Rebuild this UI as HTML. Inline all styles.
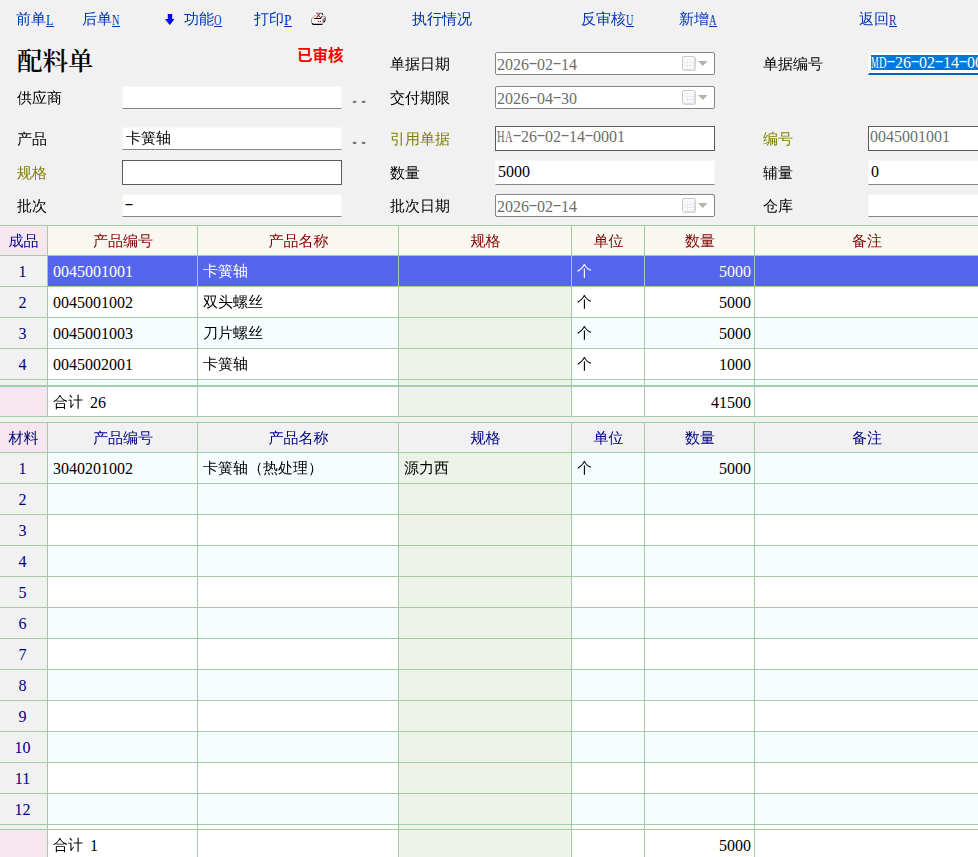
<!DOCTYPE html>
<html lang="zh-CN"><head><meta charset="utf-8"><title>配料单</title><style>
*{box-sizing:border-box;margin:0;padding:0}
html,body{width:978px;height:857px;overflow:hidden;background:#f1f1f1}
body{position:relative;font-family:"Liberation Serif","WenQuanYi Zen Hei","Noto Sans CJK SC",sans-serif;font-size:15px;color:#000;line-height:18px}
.a{position:absolute;white-space:nowrap}
.n{font-size:16px}
.h{display:inline-block;width:8px;white-space:nowrap;transform-origin:0 50%;transform:translate(-0.500px,-2px) scaleX(1.68)}
.m{display:inline-block;width:8px;white-space:nowrap;transform-origin:0 50%}
.tb{color:#0033b3;top:10px;height:18px}
.tb u{display:inline-block;position:relative;width:8px;height:18px;vertical-align:top;text-decoration:none;font-size:14px;line-height:18px}
.tb u .m{position:relative;top:2px}
.tb u::after{content:"";position:absolute;left:0;top:16px;width:8px;height:1px;background:#0033b3}
.lb{height:18px}
.ol{color:#808000}
.title{left:17px;top:44px;font-family:"Liberation Serif","Noto Serif CJK SC",serif;font-weight:600;font-size:25.500px;line-height:36px}
.stamp{left:297px;top:46px;font-family:"Liberation Sans","Noto Sans CJK SC",sans-serif;font-weight:bold;font-size:15.5px;color:#f00;line-height:20px}
.flat{background:#fff;border:1px solid #f7f7f7;border-bottom:1px solid #868686;border-radius:1px;height:23px;padding:1px 3px;line-height:18px}
.box{background:#fff;border:1px solid #858585;border-radius:2px;height:23px;padding:3px 1px 0;line-height:18px;color:#6d6d6d}
.sqb{background:#fff;border:1px solid #5a5a5a;height:25px;padding:1px 2px;line-height:18px;color:#6d6d6d}
.dd{color:#727272;font-family:"Liberation Sans",sans-serif;font-weight:bold;letter-spacing:2.900px;font-size:22px;line-height:22px;transform-origin:0 100%;transform:scaleY(.68)}
.hl{background:#0078d7;color:#fff;display:inline-block;height:15px;line-height:15px;vertical-align:top}
.grid{position:absolute;left:0;width:978px;background:#a4cca4}
.c{position:absolute;white-space:nowrap;overflow:hidden;line-height:18px}
.c .n{position:relative;top:1px}
</style></head><body>
<div class="a tb" style="left:16px">前单<u><span class="m" style="transform:scaleX(0.865)">L</span></u></div>
<div class="a tb" style="left:82px">后单<u><span class="m" style="transform:scaleX(0.732)">N</span></u></div>
<div class="a tb" style="left:184px">功能<u><span class="m" style="transform:scaleX(0.732)">O</span></u></div>
<div class="a tb" style="left:254px">打印<u><span class="m" style="transform:scaleX(0.950)">P</span></u></div>
<div class="a tb" style="left:412px">执行情况</div>
<div class="a tb" style="left:581px">反审核<u><span class="m" style="transform:scaleX(0.732)">U</span></u></div>
<div class="a tb" style="left:679px">新增<u><span class="m" style="transform:scaleX(0.732)">A</span></u></div>
<div class="a tb" style="left:859px">返回<u><span class="m" style="transform:scaleX(0.792)">R</span></u></div>
<svg class="a" style="left:158px;top:6px" width="30" height="26" viewBox="0 0 30 26"><path d="M9.800 8h4.400v5h2.200l-4.400 6-4.700-6h2.500z" fill="#0000ff"/><path d="M7.200 13.400l4.600 5.500" stroke="#6e6e46" stroke-width="1" fill="none"/></svg>
<svg class="a" style="left:304px;top:6px" width="30" height="26" viewBox="0 0 30 26"><path d="M12 7.300h7l-2 5.200H8z" fill="#fff"/><path d="M7.300 13l11.200 0 3.500-2.600v4.200l-3.500 3.700H8.500l-1.200-1z" fill="#fff"/><path d="M18.500 13l3.500-2.600v4.300l-3.500 3.600z" fill="#828282"/><path d="M12 7.300h7" stroke="#6a6a6a" stroke-width="1"/><circle cx="18.500" cy="8.300" r=".7" fill="#000"/><path d="M11.500 9L7.500 13v4" stroke="#8c8c8c" stroke-width=".9" fill="none"/><path d="M12.400 11.700l3.300-3.500" stroke="#f00" stroke-width="1.100"/><path d="M13.400 8.300l3.200 3.300" stroke="#a01010" stroke-width="1"/><path d="M17.700 10.300l-.9 2" stroke="#000" stroke-width="1"/><path d="M10.200 12.500h6.700" stroke="#000" stroke-width="1"/><path d="M17.500 10.200l4 .2" stroke="#8c8c8c" stroke-width=".9"/><path d="M8 17.300l1.200 1h9.200" stroke="#000" stroke-width="1.200" fill="none"/><circle cx="14.500" cy="15.500" r=".75" fill="#f00"/><circle cx="16.500" cy="15.500" r=".75" fill="#f00"/><circle cx="20.400" cy="15.400" r=".7" fill="#000"/></svg>
<div class="a title" style="">配料单</div>
<div class="a stamp" style="">已审核</div>
<div class="a lb" style="left:390px;top:55px">单据日期</div>
<div class="a lb" style="left:763px;top:55px">单据编号</div>
<div class="a lb" style="left:17px;top:89px">供应商</div>
<div class="a lb" style="left:390px;top:89px">交付期限</div>
<div class="a lb" style="left:17px;top:130px">产品</div>
<div class="a lb ol" style="left:390px;top:130px">引用单据</div>
<div class="a lb ol" style="left:763px;top:130px">编号</div>
<div class="a lb ol" style="left:17px;top:164px">规格</div>
<div class="a lb" style="left:390px;top:164px">数量</div>
<div class="a lb" style="left:763px;top:164px">辅量</div>
<div class="a lb" style="left:17px;top:197px">批次</div>
<div class="a lb" style="left:390px;top:197px">批次日期</div>
<div class="a lb" style="left:763px;top:197px">仓库</div>
<div class="a box" style="left:495px;top:52px;width:220px"><span class="n">2026<span class="h">-</span>02<span class="h">-</span>14</span><svg style="position:absolute;left:186px;top:3px" width="27" height="16" viewBox="0 0 27 16"><rect x="1.500" y="1.500" width="12" height="13" rx="1" fill="#eef1f6" stroke="#e3dede"/><rect x="0.500" y="0.500" width="12.500" height="13.500" rx="1.500" fill="#fbfcfd" stroke="#cdc4c4"/><path d="M2.500 3.500h9.500v9h-9.500z" fill="#e6eaf1"/><path d="M3 4h2v2H3zM6 4h2v2H6zM9 4h2v2H9zM3 7h2v2H3zM6 7h2v2H6zM9 7h2v2H9zM3 10h2v2H3zM6 10h2v2H6zM9 10h2v2H9z" fill="#fff"/><path d="M16 5h9.500l-4.750 5z" fill="#b3b3aa"/></svg></div>
<div class="a box" style="left:495px;top:86px;width:220px"><span class="n">2026<span class="h">-</span>04<span class="h">-</span>30</span><svg style="position:absolute;left:186px;top:3px" width="27" height="16" viewBox="0 0 27 16"><rect x="1.500" y="1.500" width="12" height="13" rx="1" fill="#eef1f6" stroke="#e3dede"/><rect x="0.500" y="0.500" width="12.500" height="13.500" rx="1.500" fill="#fbfcfd" stroke="#cdc4c4"/><path d="M2.500 3.500h9.500v9h-9.500z" fill="#e6eaf1"/><path d="M3 4h2v2H3zM6 4h2v2H6zM9 4h2v2H9zM3 7h2v2H3zM6 7h2v2H6zM9 7h2v2H9zM3 10h2v2H3zM6 10h2v2H6zM9 10h2v2H9z" fill="#fff"/><path d="M16 5h9.500l-4.750 5z" fill="#b3b3aa"/></svg></div>
<div class="a box" style="left:495px;top:194px;width:220px"><span class="n">2026<span class="h">-</span>02<span class="h">-</span>14</span><svg style="position:absolute;left:186px;top:3px" width="27" height="16" viewBox="0 0 27 16"><rect x="1.500" y="1.500" width="12" height="13" rx="1" fill="#eef1f6" stroke="#e3dede"/><rect x="0.500" y="0.500" width="12.500" height="13.500" rx="1.500" fill="#fbfcfd" stroke="#cdc4c4"/><path d="M2.500 3.500h9.500v9h-9.500z" fill="#e6eaf1"/><path d="M3 4h2v2H3zM6 4h2v2H6zM9 4h2v2H9zM3 7h2v2H3zM6 7h2v2H6zM9 7h2v2H9zM3 10h2v2H3zM6 10h2v2H6zM9 10h2v2H9z" fill="#fff"/><path d="M16 5h9.500l-4.750 5z" fill="#b3b3aa"/></svg></div>
<div class="a flat" style="left:122px;top:86px;width:220px"></div>
<div class="a flat" style="left:122px;top:127px;width:220px">卡簧轴</div>
<div class="a flat" style="left:122px;top:194px;width:220px;padding:2px 2px"><span class="n"><span class="h">-</span></span></div>
<div class="a flat" style="left:495px;top:160px;width:220px;height:25px;padding:2px 2px"><span class="n">5000</span></div>
<div class="a flat" style="left:868px;top:160px;width:120px;height:25px;padding:2px 2px"><span class="n">0</span></div>
<div class="a flat" style="left:868px;top:194px;width:120px"></div>
<div class="a sqb" style="left:122px;top:160px;width:220px"></div>
<div class="a sqb" style="left:495px;top:126px;width:220px;padding-left:1px"><span class="n"><span class="m" style="transform:scaleX(0.658)">H</span><span class="m" style="transform:scaleX(0.658)">A</span><span class="h">-</span>26<span class="h">-</span>02<span class="h">-</span>14<span class="h">-</span>0001</span></div>
<div class="a sqb" style="left:868px;top:126px;width:120px;padding-left:1px"><span class="n">0045001001</span></div>
<div class="a " style="left:868px;top:52px;width:120px;height:23px;border:1px solid #f7f7f7;border-bottom:2px solid #0067c0;background:#fff;padding:2px 2px;line-height:15px"><span class="hl"><span class="n"><span class="m" style="transform:scaleX(0.534)">M</span><span class="m" style="transform:scaleX(0.658)">D</span><span class="h">-</span>26<span class="h">-</span>02<span class="h">-</span>14<span class="h">-</span>0001</span></span></div>
<div class="a dd" style="left:351.500px;top:84px">..</div>
<div class="a dd" style="left:351.500px;top:125px">..</div>
<div class="grid" style="top:225px;height:192px"></div>
<div class="c" style="left:0px;top:226px;width:47px;height:29px;background:#f5e6f0;text-align:center;color:#000080;padding-top:6px">成品</div>
<div class="c" style="left:48px;top:226px;width:149px;height:29px;background:#f8f8f0;text-align:center;color:#800000;padding-top:6px;padding-left:1px">产品编号</div>
<div class="c" style="left:198px;top:226px;width:200px;height:29px;background:#f8f8f0;text-align:center;color:#800000;padding-top:6px;padding-left:1px">产品名称</div>
<div class="c" style="left:399px;top:226px;width:172px;height:29px;background:#f8f8f0;text-align:center;color:#800000;padding-top:6px;padding-left:1px">规格</div>
<div class="c" style="left:572px;top:226px;width:72px;height:29px;background:#f8f8f0;text-align:center;color:#800000;padding-top:6px;padding-left:1px">单位</div>
<div class="c" style="left:645px;top:226px;width:109px;height:29px;background:#f8f8f0;text-align:center;color:#800000;padding-top:6px;padding-left:1px">数量</div>
<div class="c" style="left:755px;top:226px;width:223px;height:29px;background:#f8f8f0;text-align:center;color:#800000;padding-top:6px;padding-left:1px">备注</div>
<div class="c" style="left:0px;top:256px;width:47px;height:30px;background:#f1f1f1;text-align:center;color:#000080;padding-top:6px;padding-right:2px"><span class="n">1</span></div>
<div class="c" style="left:48px;top:256px;width:149px;height:30px;background:#5565ee;padding-top:6px;padding-left:5px;color:#fff;"><span class="n">0045001001</span></div>
<div class="c" style="left:198px;top:256px;width:200px;height:30px;background:#5565ee;padding-top:6px;padding-left:5px;color:#fff;">卡簧轴</div>
<div class="c" style="left:399px;top:256px;width:172px;height:30px;background:#5565ee;padding-top:6px;padding-left:5px;color:#fff;"></div>
<div class="c" style="left:572px;top:256px;width:72px;height:30px;background:#5565ee;padding-top:6px;padding-left:5px;color:#fff;">个</div>
<div class="c" style="left:645px;top:256px;width:109px;height:30px;background:#5565ee;padding-top:6px;padding-left:5px;color:#fff;text-align:right;padding-right:3px;"><span class="n">5000</span></div>
<div class="c" style="left:755px;top:256px;width:223px;height:30px;background:#5565ee;padding-top:6px;padding-left:5px;color:#fff;"></div>
<div class="c" style="left:0px;top:287px;width:47px;height:30px;background:#f1f1f1;text-align:center;color:#000080;padding-top:6px;padding-right:2px"><span class="n">2</span></div>
<div class="c" style="left:48px;top:287px;width:149px;height:30px;background:#fff;padding-top:6px;padding-left:5px;"><span class="n">0045001002</span></div>
<div class="c" style="left:198px;top:287px;width:200px;height:30px;background:#fff;padding-top:6px;padding-left:5px;">双头螺丝</div>
<div class="c" style="left:399px;top:287px;width:172px;height:30px;background:#edf3e9;padding-top:6px;padding-left:5px;"></div>
<div class="c" style="left:572px;top:287px;width:72px;height:30px;background:#fff;padding-top:6px;padding-left:5px;">个</div>
<div class="c" style="left:645px;top:287px;width:109px;height:30px;background:#fff;padding-top:6px;padding-left:5px;text-align:right;padding-right:3px;"><span class="n">5000</span></div>
<div class="c" style="left:755px;top:287px;width:223px;height:30px;background:#fff;padding-top:6px;padding-left:5px;"></div>
<div class="c" style="left:0px;top:318px;width:47px;height:30px;background:#f1f1f1;text-align:center;color:#000080;padding-top:6px;padding-right:2px"><span class="n">3</span></div>
<div class="c" style="left:48px;top:318px;width:149px;height:30px;background:#f5fdff;padding-top:6px;padding-left:5px;"><span class="n">0045001003</span></div>
<div class="c" style="left:198px;top:318px;width:200px;height:30px;background:#f5fdff;padding-top:6px;padding-left:5px;">刀片螺丝</div>
<div class="c" style="left:399px;top:318px;width:172px;height:30px;background:#edf3e9;padding-top:6px;padding-left:5px;"></div>
<div class="c" style="left:572px;top:318px;width:72px;height:30px;background:#f5fdff;padding-top:6px;padding-left:5px;">个</div>
<div class="c" style="left:645px;top:318px;width:109px;height:30px;background:#f5fdff;padding-top:6px;padding-left:5px;text-align:right;padding-right:3px;"><span class="n">5000</span></div>
<div class="c" style="left:755px;top:318px;width:223px;height:30px;background:#f5fdff;padding-top:6px;padding-left:5px;"></div>
<div class="c" style="left:0px;top:349px;width:47px;height:30px;background:#f1f1f1;text-align:center;color:#000080;padding-top:6px;padding-right:2px"><span class="n">4</span></div>
<div class="c" style="left:48px;top:349px;width:149px;height:30px;background:#fff;padding-top:6px;padding-left:5px;"><span class="n">0045002001</span></div>
<div class="c" style="left:198px;top:349px;width:200px;height:30px;background:#fff;padding-top:6px;padding-left:5px;">卡簧轴</div>
<div class="c" style="left:399px;top:349px;width:172px;height:30px;background:#edf3e9;padding-top:6px;padding-left:5px;"></div>
<div class="c" style="left:572px;top:349px;width:72px;height:30px;background:#fff;padding-top:6px;padding-left:5px;">个</div>
<div class="c" style="left:645px;top:349px;width:109px;height:30px;background:#fff;padding-top:6px;padding-left:5px;text-align:right;padding-right:3px;"><span class="n">1000</span></div>
<div class="c" style="left:755px;top:349px;width:223px;height:30px;background:#fff;padding-top:6px;padding-left:5px;"></div>
<div class="c" style="left:0px;top:380px;width:47px;height:5px;background:#f1f1f1;"></div>
<div class="c" style="left:48px;top:380px;width:149px;height:5px;background:#f5fdff;"></div>
<div class="c" style="left:198px;top:380px;width:200px;height:5px;background:#f5fdff;"></div>
<div class="c" style="left:399px;top:380px;width:172px;height:5px;background:#edf3e9;"></div>
<div class="c" style="left:572px;top:380px;width:72px;height:5px;background:#f5fdff;"></div>
<div class="c" style="left:645px;top:380px;width:109px;height:5px;background:#f5fdff;"></div>
<div class="c" style="left:755px;top:380px;width:223px;height:5px;background:#f5fdff;"></div>
<div class="c" style="left:0;top:385px;width:978px;height:1px;background:#9ec4ea"></div>
<div class="c" style="left:0px;top:387px;width:47px;height:29px;background:#f5e6f0;"></div>
<div class="c" style="left:48px;top:387px;width:149px;height:29px;background:#fff;padding-top:6px;padding-left:5px;">合计<span style="margin-left:7px"><span class="n">26</span></span></div>
<div class="c" style="left:198px;top:387px;width:200px;height:29px;background:#fff;padding-top:6px;padding-left:5px;"></div>
<div class="c" style="left:399px;top:387px;width:172px;height:29px;background:#edf3e9;padding-top:6px;padding-left:5px;"></div>
<div class="c" style="left:572px;top:387px;width:72px;height:29px;background:#fff;padding-top:6px;padding-left:5px;"></div>
<div class="c" style="left:645px;top:387px;width:109px;height:29px;background:#fff;padding-top:6px;padding-left:5px;text-align:right;padding-right:3px;"><span class="n">41500</span></div>
<div class="c" style="left:755px;top:387px;width:223px;height:29px;background:#fff;padding-top:6px;padding-left:5px;"></div>
<div class="grid" style="top:422px;height:435px"></div>
<div class="c" style="left:0px;top:423px;width:47px;height:29px;background:#f5e6f0;text-align:center;color:#000080;padding-top:6px">材料</div>
<div class="c" style="left:48px;top:423px;width:149px;height:29px;background:#f1f1f1;text-align:center;color:#000080;padding-top:6px;padding-left:1px">产品编号</div>
<div class="c" style="left:198px;top:423px;width:200px;height:29px;background:#f1f1f1;text-align:center;color:#000080;padding-top:6px;padding-left:1px">产品名称</div>
<div class="c" style="left:399px;top:423px;width:172px;height:29px;background:#f1f1f1;text-align:center;color:#000080;padding-top:6px;padding-left:1px">规格</div>
<div class="c" style="left:572px;top:423px;width:72px;height:29px;background:#f1f1f1;text-align:center;color:#000080;padding-top:6px;padding-left:1px">单位</div>
<div class="c" style="left:645px;top:423px;width:109px;height:29px;background:#f1f1f1;text-align:center;color:#000080;padding-top:6px;padding-left:1px">数量</div>
<div class="c" style="left:755px;top:423px;width:223px;height:29px;background:#f1f1f1;text-align:center;color:#000080;padding-top:6px;padding-left:1px">备注</div>
<div class="c" style="left:0px;top:453px;width:47px;height:30px;background:#f1f1f1;text-align:center;color:#000080;padding-top:6px;padding-right:2px"><span class="n">1</span></div>
<div class="c" style="left:48px;top:453px;width:149px;height:30px;background:#f5fdff;padding-top:6px;padding-left:5px;"><span class="n">3040201002</span></div>
<div class="c" style="left:198px;top:453px;width:200px;height:30px;background:#f5fdff;padding-top:6px;padding-left:5px;">卡簧轴（热处理）</div>
<div class="c" style="left:399px;top:453px;width:172px;height:30px;background:#edf3e9;padding-top:6px;padding-left:5px;">源力西</div>
<div class="c" style="left:572px;top:453px;width:72px;height:30px;background:#f5fdff;padding-top:6px;padding-left:5px;">个</div>
<div class="c" style="left:645px;top:453px;width:109px;height:30px;background:#f5fdff;padding-top:6px;padding-left:5px;text-align:right;padding-right:3px;"><span class="n">5000</span></div>
<div class="c" style="left:755px;top:453px;width:223px;height:30px;background:#f5fdff;padding-top:6px;padding-left:5px;"></div>
<div class="c" style="left:0px;top:484px;width:47px;height:30px;background:#f1f1f1;text-align:center;color:#000080;padding-top:6px;padding-right:2px"><span class="n">2</span></div>
<div class="c" style="left:48px;top:484px;width:149px;height:30px;background:#f5fdff;padding-top:6px;padding-left:5px;"></div>
<div class="c" style="left:198px;top:484px;width:200px;height:30px;background:#f5fdff;padding-top:6px;padding-left:5px;"></div>
<div class="c" style="left:399px;top:484px;width:172px;height:30px;background:#edf3e9;padding-top:6px;padding-left:5px;"></div>
<div class="c" style="left:572px;top:484px;width:72px;height:30px;background:#f5fdff;padding-top:6px;padding-left:5px;"></div>
<div class="c" style="left:645px;top:484px;width:109px;height:30px;background:#f5fdff;padding-top:6px;padding-left:5px;text-align:right;padding-right:3px;"></div>
<div class="c" style="left:755px;top:484px;width:223px;height:30px;background:#f5fdff;padding-top:6px;padding-left:5px;"></div>
<div class="c" style="left:0px;top:515px;width:47px;height:30px;background:#f1f1f1;text-align:center;color:#000080;padding-top:6px;padding-right:2px"><span class="n">3</span></div>
<div class="c" style="left:48px;top:515px;width:149px;height:30px;background:#fff;padding-top:6px;padding-left:5px;"></div>
<div class="c" style="left:198px;top:515px;width:200px;height:30px;background:#fff;padding-top:6px;padding-left:5px;"></div>
<div class="c" style="left:399px;top:515px;width:172px;height:30px;background:#edf3e9;padding-top:6px;padding-left:5px;"></div>
<div class="c" style="left:572px;top:515px;width:72px;height:30px;background:#fff;padding-top:6px;padding-left:5px;"></div>
<div class="c" style="left:645px;top:515px;width:109px;height:30px;background:#fff;padding-top:6px;padding-left:5px;text-align:right;padding-right:3px;"></div>
<div class="c" style="left:755px;top:515px;width:223px;height:30px;background:#fff;padding-top:6px;padding-left:5px;"></div>
<div class="c" style="left:0px;top:546px;width:47px;height:30px;background:#f1f1f1;text-align:center;color:#000080;padding-top:6px;padding-right:2px"><span class="n">4</span></div>
<div class="c" style="left:48px;top:546px;width:149px;height:30px;background:#f5fdff;padding-top:6px;padding-left:5px;"></div>
<div class="c" style="left:198px;top:546px;width:200px;height:30px;background:#f5fdff;padding-top:6px;padding-left:5px;"></div>
<div class="c" style="left:399px;top:546px;width:172px;height:30px;background:#edf3e9;padding-top:6px;padding-left:5px;"></div>
<div class="c" style="left:572px;top:546px;width:72px;height:30px;background:#f5fdff;padding-top:6px;padding-left:5px;"></div>
<div class="c" style="left:645px;top:546px;width:109px;height:30px;background:#f5fdff;padding-top:6px;padding-left:5px;text-align:right;padding-right:3px;"></div>
<div class="c" style="left:755px;top:546px;width:223px;height:30px;background:#f5fdff;padding-top:6px;padding-left:5px;"></div>
<div class="c" style="left:0px;top:577px;width:47px;height:30px;background:#f1f1f1;text-align:center;color:#000080;padding-top:6px;padding-right:2px"><span class="n">5</span></div>
<div class="c" style="left:48px;top:577px;width:149px;height:30px;background:#fff;padding-top:6px;padding-left:5px;"></div>
<div class="c" style="left:198px;top:577px;width:200px;height:30px;background:#fff;padding-top:6px;padding-left:5px;"></div>
<div class="c" style="left:399px;top:577px;width:172px;height:30px;background:#edf3e9;padding-top:6px;padding-left:5px;"></div>
<div class="c" style="left:572px;top:577px;width:72px;height:30px;background:#fff;padding-top:6px;padding-left:5px;"></div>
<div class="c" style="left:645px;top:577px;width:109px;height:30px;background:#fff;padding-top:6px;padding-left:5px;text-align:right;padding-right:3px;"></div>
<div class="c" style="left:755px;top:577px;width:223px;height:30px;background:#fff;padding-top:6px;padding-left:5px;"></div>
<div class="c" style="left:0px;top:608px;width:47px;height:30px;background:#f1f1f1;text-align:center;color:#000080;padding-top:6px;padding-right:2px"><span class="n">6</span></div>
<div class="c" style="left:48px;top:608px;width:149px;height:30px;background:#f5fdff;padding-top:6px;padding-left:5px;"></div>
<div class="c" style="left:198px;top:608px;width:200px;height:30px;background:#f5fdff;padding-top:6px;padding-left:5px;"></div>
<div class="c" style="left:399px;top:608px;width:172px;height:30px;background:#edf3e9;padding-top:6px;padding-left:5px;"></div>
<div class="c" style="left:572px;top:608px;width:72px;height:30px;background:#f5fdff;padding-top:6px;padding-left:5px;"></div>
<div class="c" style="left:645px;top:608px;width:109px;height:30px;background:#f5fdff;padding-top:6px;padding-left:5px;text-align:right;padding-right:3px;"></div>
<div class="c" style="left:755px;top:608px;width:223px;height:30px;background:#f5fdff;padding-top:6px;padding-left:5px;"></div>
<div class="c" style="left:0px;top:639px;width:47px;height:30px;background:#f1f1f1;text-align:center;color:#000080;padding-top:6px;padding-right:2px"><span class="n">7</span></div>
<div class="c" style="left:48px;top:639px;width:149px;height:30px;background:#fff;padding-top:6px;padding-left:5px;"></div>
<div class="c" style="left:198px;top:639px;width:200px;height:30px;background:#fff;padding-top:6px;padding-left:5px;"></div>
<div class="c" style="left:399px;top:639px;width:172px;height:30px;background:#edf3e9;padding-top:6px;padding-left:5px;"></div>
<div class="c" style="left:572px;top:639px;width:72px;height:30px;background:#fff;padding-top:6px;padding-left:5px;"></div>
<div class="c" style="left:645px;top:639px;width:109px;height:30px;background:#fff;padding-top:6px;padding-left:5px;text-align:right;padding-right:3px;"></div>
<div class="c" style="left:755px;top:639px;width:223px;height:30px;background:#fff;padding-top:6px;padding-left:5px;"></div>
<div class="c" style="left:0px;top:670px;width:47px;height:30px;background:#f1f1f1;text-align:center;color:#000080;padding-top:6px;padding-right:2px"><span class="n">8</span></div>
<div class="c" style="left:48px;top:670px;width:149px;height:30px;background:#f5fdff;padding-top:6px;padding-left:5px;"></div>
<div class="c" style="left:198px;top:670px;width:200px;height:30px;background:#f5fdff;padding-top:6px;padding-left:5px;"></div>
<div class="c" style="left:399px;top:670px;width:172px;height:30px;background:#edf3e9;padding-top:6px;padding-left:5px;"></div>
<div class="c" style="left:572px;top:670px;width:72px;height:30px;background:#f5fdff;padding-top:6px;padding-left:5px;"></div>
<div class="c" style="left:645px;top:670px;width:109px;height:30px;background:#f5fdff;padding-top:6px;padding-left:5px;text-align:right;padding-right:3px;"></div>
<div class="c" style="left:755px;top:670px;width:223px;height:30px;background:#f5fdff;padding-top:6px;padding-left:5px;"></div>
<div class="c" style="left:0px;top:701px;width:47px;height:30px;background:#f1f1f1;text-align:center;color:#000080;padding-top:6px;padding-right:2px"><span class="n">9</span></div>
<div class="c" style="left:48px;top:701px;width:149px;height:30px;background:#fff;padding-top:6px;padding-left:5px;"></div>
<div class="c" style="left:198px;top:701px;width:200px;height:30px;background:#fff;padding-top:6px;padding-left:5px;"></div>
<div class="c" style="left:399px;top:701px;width:172px;height:30px;background:#edf3e9;padding-top:6px;padding-left:5px;"></div>
<div class="c" style="left:572px;top:701px;width:72px;height:30px;background:#fff;padding-top:6px;padding-left:5px;"></div>
<div class="c" style="left:645px;top:701px;width:109px;height:30px;background:#fff;padding-top:6px;padding-left:5px;text-align:right;padding-right:3px;"></div>
<div class="c" style="left:755px;top:701px;width:223px;height:30px;background:#fff;padding-top:6px;padding-left:5px;"></div>
<div class="c" style="left:0px;top:732px;width:47px;height:30px;background:#f1f1f1;text-align:center;color:#000080;padding-top:6px;padding-right:2px"><span class="n">10</span></div>
<div class="c" style="left:48px;top:732px;width:149px;height:30px;background:#f5fdff;padding-top:6px;padding-left:5px;"></div>
<div class="c" style="left:198px;top:732px;width:200px;height:30px;background:#f5fdff;padding-top:6px;padding-left:5px;"></div>
<div class="c" style="left:399px;top:732px;width:172px;height:30px;background:#edf3e9;padding-top:6px;padding-left:5px;"></div>
<div class="c" style="left:572px;top:732px;width:72px;height:30px;background:#f5fdff;padding-top:6px;padding-left:5px;"></div>
<div class="c" style="left:645px;top:732px;width:109px;height:30px;background:#f5fdff;padding-top:6px;padding-left:5px;text-align:right;padding-right:3px;"></div>
<div class="c" style="left:755px;top:732px;width:223px;height:30px;background:#f5fdff;padding-top:6px;padding-left:5px;"></div>
<div class="c" style="left:0px;top:763px;width:47px;height:30px;background:#f1f1f1;text-align:center;color:#000080;padding-top:6px;padding-right:2px"><span class="n">11</span></div>
<div class="c" style="left:48px;top:763px;width:149px;height:30px;background:#fff;padding-top:6px;padding-left:5px;"></div>
<div class="c" style="left:198px;top:763px;width:200px;height:30px;background:#fff;padding-top:6px;padding-left:5px;"></div>
<div class="c" style="left:399px;top:763px;width:172px;height:30px;background:#edf3e9;padding-top:6px;padding-left:5px;"></div>
<div class="c" style="left:572px;top:763px;width:72px;height:30px;background:#fff;padding-top:6px;padding-left:5px;"></div>
<div class="c" style="left:645px;top:763px;width:109px;height:30px;background:#fff;padding-top:6px;padding-left:5px;text-align:right;padding-right:3px;"></div>
<div class="c" style="left:755px;top:763px;width:223px;height:30px;background:#fff;padding-top:6px;padding-left:5px;"></div>
<div class="c" style="left:0px;top:794px;width:47px;height:30px;background:#f1f1f1;text-align:center;color:#000080;padding-top:6px;padding-right:2px"><span class="n">12</span></div>
<div class="c" style="left:48px;top:794px;width:149px;height:30px;background:#f5fdff;padding-top:6px;padding-left:5px;"></div>
<div class="c" style="left:198px;top:794px;width:200px;height:30px;background:#f5fdff;padding-top:6px;padding-left:5px;"></div>
<div class="c" style="left:399px;top:794px;width:172px;height:30px;background:#edf3e9;padding-top:6px;padding-left:5px;"></div>
<div class="c" style="left:572px;top:794px;width:72px;height:30px;background:#f5fdff;padding-top:6px;padding-left:5px;"></div>
<div class="c" style="left:645px;top:794px;width:109px;height:30px;background:#f5fdff;padding-top:6px;padding-left:5px;text-align:right;padding-right:3px;"></div>
<div class="c" style="left:755px;top:794px;width:223px;height:30px;background:#f5fdff;padding-top:6px;padding-left:5px;"></div>
<div class="c" style="left:0px;top:825px;width:47px;height:4px;background:#f1f1f1;"></div>
<div class="c" style="left:48px;top:825px;width:149px;height:4px;background:#fff;"></div>
<div class="c" style="left:198px;top:825px;width:200px;height:4px;background:#fff;"></div>
<div class="c" style="left:399px;top:825px;width:172px;height:4px;background:#edf3e9;"></div>
<div class="c" style="left:572px;top:825px;width:72px;height:4px;background:#fff;"></div>
<div class="c" style="left:645px;top:825px;width:109px;height:4px;background:#fff;"></div>
<div class="c" style="left:755px;top:825px;width:223px;height:4px;background:#fff;"></div>
<div class="c" style="left:0px;top:830px;width:47px;height:29px;background:#f5e6f0;"></div>
<div class="c" style="left:48px;top:830px;width:149px;height:29px;background:#fff;padding-top:6px;padding-left:5px;">合计<span style="margin-left:7px"><span class="n">1</span></span></div>
<div class="c" style="left:198px;top:830px;width:200px;height:29px;background:#fff;padding-top:6px;padding-left:5px;"></div>
<div class="c" style="left:399px;top:830px;width:172px;height:29px;background:#edf3e9;padding-top:6px;padding-left:5px;"></div>
<div class="c" style="left:572px;top:830px;width:72px;height:29px;background:#fff;padding-top:6px;padding-left:5px;"></div>
<div class="c" style="left:645px;top:830px;width:109px;height:29px;background:#fff;padding-top:6px;padding-left:5px;text-align:right;padding-right:3px;"><span class="n">5000</span></div>
<div class="c" style="left:755px;top:830px;width:223px;height:29px;background:#fff;padding-top:6px;padding-left:5px;"></div>
</body></html>
